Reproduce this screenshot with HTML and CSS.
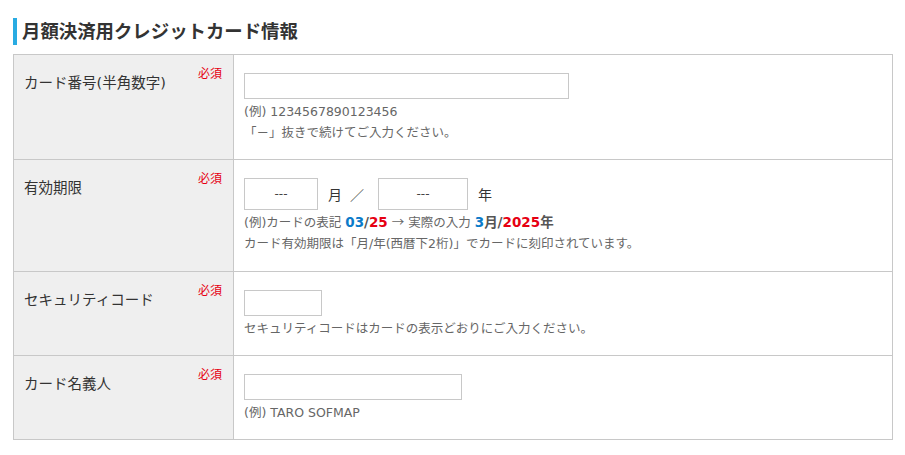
FILE: index.html
```html
<!DOCTYPE html>
<html lang="ja">
<head>
<meta charset="utf-8">
<title>月額決済用クレジットカード情報</title>
<link rel="stylesheet" href="styles.css">
</head>
<body>
<div class="page">
  <h2 class="section-title">月額決済用クレジットカード情報</h2>
  <table class="form-table">
    <tr class="row-card">
      <th>
        <div class="label-wrap"><span class="label">カード番号(半角数字)</span><span class="req">必須</span></div>
      </th>
      <td>
        <input class="field field-card" type="text">
        <div class="notes">
          <p class="note">(例) 1234567890123456</p>
          <p class="note">「－」抜きで続けてご入力ください。</p>
        </div>
      </td>
    </tr>
    <tr class="row-exp">
      <th>
        <div class="label-wrap"><span class="label">有効期限</span><span class="req">必須</span></div>
      </th>
      <td>
        <div class="exp-line">
          <input class="field field-month" type="text" value="---">
          <span class="unit unit-month">月</span><span class="slash">／</span>
          <input class="field field-year" type="text" value="---">
          <span class="unit">年</span>
        </div>
        <div class="notes notes-exp">
          <p class="note">(例)カードの表記 <b class="blue">03</b><b class="dark">/</b><b class="red">25</b> <span class="arrow">→</span> 実際の入力 <b class="blue">3</b><b class="dark">月/</b><b class="red">2025</b><b class="dark">年</b></p>
          <p class="note">カード有効期限は「月/年(西暦下2桁)」でカードに刻印されています。</p>
        </div>
      </td>
    </tr>
    <tr class="row-cvc">
      <th>
        <div class="label-wrap"><span class="label">セキュリティコード</span><span class="req">必須</span></div>
      </th>
      <td>
        <input class="field field-cvc" type="text">
        <div class="notes">
          <p class="note">セキュリティコードはカードの表示どおりにご入力ください。</p>
        </div>
      </td>
    </tr>
    <tr class="row-name">
      <th>
        <div class="label-wrap"><span class="label">カード名義人</span><span class="req">必須</span></div>
      </th>
      <td>
        <input class="field field-name" type="text">
        <div class="notes">
          <p class="note">(例) TARO SOFMAP</p>
        </div>
      </td>
    </tr>
  </table>
</div>
</body>
</html>
```

FILE: styles.css
```css
* { box-sizing: border-box; }
html, body {
  margin: 0;
  padding: 0;
  background: #fff;
}
body {
  font-family: "DejaVu Sans", "Noto Sans CJK JP", sans-serif;
  color: #333;
}
.page {
  padding: 18px 13px 0 13px;
}
.section-title {
  margin: 0 0 9px 0;
  height: 27px;
  line-height: 27px;
  border-left: 4px solid #29abe2;
  padding-left: 5px;
  font-size: 18.4px;
  font-weight: bold;
  color: #333;
}
.form-table {
  width: 880px;
  border-collapse: collapse;
  border: 1px solid #c8c8c8;
}
.form-table th,
.form-table td {
  border: 1px solid #c8c8c8;
  vertical-align: top;
  text-align: left;
  font-weight: normal;
}
.form-table th {
  width: 220px;
  background: #efefef;
  padding: 18px 10px 0 10px;
}
.form-table td {
  background: #fff;
  padding: 18px 10px 16px 10px;
}
.label-wrap {
  display: flex;
  justify-content: space-between;
  align-items: flex-start;
}
.label {
  font-size: 14.5px;
  line-height: 21px;
  color: #333;
}
.req {
  font-size: 12px;
  line-height: 16px;
  color: #e60012;
  margin-top: -7px;
  margin-right: 1px;
}
.field {
  display: block;
  height: 26px;
  border: 1px solid #c8c8c8;
  border-radius: 0;
  background: #fff;
  margin: 0;
  padding: 0 6px;
  font-family: inherit;
  font-size: 13px;
  color: #333;
  outline: none;
}
.field-card { width: 325px; }
.field-cvc { width: 78px; }
.field-name { width: 218px; }
.exp-line {
  display: flex;
  align-items: center;
  height: 32px;
}
.field-month,
.field-year {
  height: 32px;
  text-align: center;
  font-size: 12px;
  color: #444;
}
.field-month { width: 74px; }
.field-year { width: 90px; }
.unit {
  font-size: 14px;
  color: #333;
  margin-left: 10px;
}
.slash {
  font-size: 14px;
  color: #555;
  margin-left: 8px;
  margin-right: 14px;
}
.notes {
  padding-top: 2px;
}
.notes-exp {
  padding-top: 1px;
}
.row-exp td {
  padding-bottom: 17px;
}
.note {
  margin: 0;
  font-size: 12.5px;
  line-height: 21px;
  color: #666;
}
.note b {
  font-weight: bold;
  font-size: 13.5px;
}
.arrow {
  font-family: "Noto Sans CJK JP", sans-serif;
  font-size: 12.5px;
}
.blue { color: #0b7bc9; }
.red { color: #e60012; }
.dark { color: #555; }
```
